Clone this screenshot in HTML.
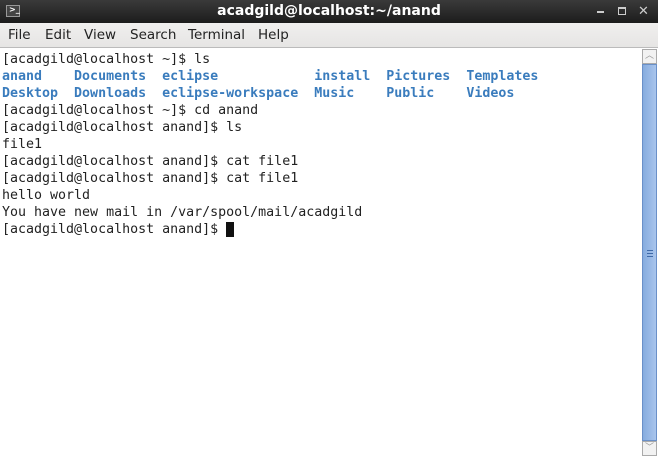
<!DOCTYPE html>
<html><head><meta charset="utf-8"><style>
*{margin:0;padding:0;box-sizing:border-box}
body{width:658px;height:458px;overflow:hidden;background:#fff;position:relative;font-family:"DejaVu Sans",sans-serif}
#title{position:absolute;left:0;top:0;width:658px;height:23px;background:linear-gradient(#3a3a3a,#1c1c1c);color:#fff;font-weight:bold;font-size:14px;text-align:center;line-height:23px}
#icon{position:absolute;left:6px;top:5px;width:14px;height:12px;background:#444;border:1px solid #999;}
#icon span{position:absolute;left:2px;top:-1px;font-size:8px;color:#fff;line-height:10px}
#menu{position:absolute;left:0;top:23px;width:658px;height:25px;background:linear-gradient(#f0efee,#e6e5e4);border-bottom:1px solid #bbb;font-size:13.5px;color:#222}
#menu span{position:absolute;top:4px}
#term{position:absolute;left:2px;top:51px;font-family:"DejaVu Sans Mono",monospace;font-size:13.3px;line-height:17px;white-space:pre;color:#222}
.b{color:#3a7cbd;font-weight:bold}
#sb{position:absolute;left:641px;top:49px;width:16px;height:409px;background:#fff}
.arr{position:absolute;left:1px;width:15px;height:15px;border:1px solid #aaa;background:#f2f2f2;color:#999;font-size:9px;text-align:center;line-height:13px}
#thumb{position:absolute;left:1px;top:15px;width:15px;height:377px;background:linear-gradient(90deg,#86acdf,#a9c5ec);border:1px solid #6a90c8}
#thumb i{position:absolute;left:4px;width:6px;height:1px;background:#3f6aa8}
</style></head><body>
<div id="title"><div id="icon"><span>&gt;_</span></div>acadgild@localhost:~/anand
<span style="position:absolute;left:597px;top:11px;width:7px;height:2px;background:#ccc"></span>
<span style="position:absolute;left:618px;top:7px;width:8px;height:8px;border:1px solid #ccc;border-top-width:2px"></span>
<span style="position:absolute;left:638px;top:0;font-size:13px;color:#ccc">✕</span>
</div>
<div id="menu"><span style="left:8px">File</span><span style="left:45px">Edit</span><span style="left:84px">View</span><span style="left:130px">Search</span><span style="left:188px">Terminal</span><span style="left:258px">Help</span></div>
<div id="term">[acadgild@localhost ~]$ ls
<span class="b">anand    Documents  eclipse            install  Pictures  Templates</span>
<span class="b">Desktop  Downloads  eclipse-workspace  Music    Public    Videos</span>
[acadgild@localhost ~]$ cd anand
[acadgild@localhost anand]$ ls
file1
[acadgild@localhost anand]$ cat file1
[acadgild@localhost anand]$ cat file1
hello world
You have new mail in /var/spool/mail/acadgild
[acadgild@localhost anand]$ <span style="background:#111"> </span></div>
<div id="sb">
<div class="arr" style="top:0">︿</div>
<div id="thumb"><i style="top:185px"></i><i style="top:188px"></i><i style="top:191px"></i></div>
<div class="arr" style="top:392px">﹀</div>
</div>
</body></html>
